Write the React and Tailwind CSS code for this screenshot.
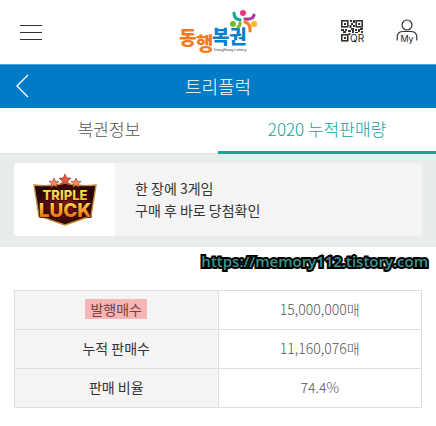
import React from "react";

const rows = [
  { label: "발행매수", value: "15,000,000매", marked: true },
  { label: "누적 판매수", value: "11,160,076매" },
  { label: "판매 비율", value: "74.4%" },
];

function Logo() {
  return (
    <svg width="80" height="46" viewBox="0 0 80 46" role="img" aria-label="동행복권">
      <g fontFamily="'Noto Sans CJK KR', sans-serif" fontWeight="900" fontSize="19">
        <text x="1" y="36" fill="#f47a20">동</text>
        <text x="18" y="42" fill="#f47a20">행</text>
        <text x="34" y="35" fill="#0a7fca">복</text>
        <text x="51" y="35" fill="#0a7fca">권</text>
      </g>
      <text x="36" y="42" fontFamily="'Liberation Sans', sans-serif" fontSize="4" fill="#444">DongHang Lottery</text>
      <g fill="none" strokeWidth="3.2" strokeLinecap="round">
        <path d="M56 4 Q56 10 62 11" stroke="#16a596" />
        <path d="M67 10 Q75 11 76 6" stroke="#b03a9c" />
        <path d="M67 13 Q73 15 72 22" stroke="#f4801f" />
        <path d="M60 18 Q62 17 62 14" stroke="#79b829" />
      </g>
      <circle cx="65" cy="4" r="3" fill="#e5367e" />
      <circle cx="55" cy="15" r="3" fill="#79b829" />
      <circle cx="76" cy="15" r="3" fill="#f9b51c" />
    </svg>
  );
}

function QrIcon() {
  return (
    <svg width="26" height="26" viewBox="0 0 26 26" aria-hidden="true">
      <g fill="none" stroke="#333" strokeWidth="1.6">
        <rect x="1.8" y="1.8" width="6" height="6" />
        <rect x="16.2" y="1.8" width="6" height="6" />
        <rect x="1.8" y="15.8" width="6" height="6" />
      </g>
      <path
        fill="#333"
        d="M4 4h2v2h-2zM18.200 4h2v2h-2zM4 18h2v2h-2zM10 1h2v2h-2zM13 1h2v3h-2zM11 4h2v2h-2zM9.500 6h2v3h-2zM13 6h2v2h-2zM1 10h3v2h-3zM5 10h2v2h-2zM3 12h3v2h-3zM8 11h3v2h-3zM11 9h3v2h-3zM12 11h2v3h-2zM15 10h2v2h-2zM18 10h2v3h-2zM20 9h3v2h-3zM15 13h3v1h-3zM21 12h2v2h-2zM8.500 14h2v2h-2z"
      />
      <text x="10" y="23" fontFamily="Inter, sans-serif" fontWeight="400" fontSize="10" fill="#222">QR</text>
    </svg>
  );
}

function MyIcon() {
  return (
    <svg width="22" height="28" viewBox="0 0 22 28" aria-hidden="true">
      <g fill="none" stroke="#333" strokeWidth="1.2" strokeLinecap="round">
        <circle cx="11" cy="7" r="5" />
        <path d="M1.200 22V19Q1.200 14 6.500 13.500H15.500Q20.800 14 20.800 19V22" />
      </g>
      <text x="11" y="24" textAnchor="middle" fontFamily="Inter, sans-serif" fontWeight="400" fontSize="9" fill="#222">My</text>
    </svg>
  );
}

const star = "M0 -6 L1.700 -2.100 L6 -1.800 L2.700 1 L3.700 5 L0 2.800 L-3.700 5 L-2.700 1 L-6 -1.800 L-1.700 -2.100Z";

function TripleLuck() {
  return (
    <svg width="66" height="54" viewBox="0 0 66 54" role="img" aria-label="Triple Luck">
      <defs>
        <linearGradient id="gold" x1="0" y1="0" x2="0" y2="1">
          <stop offset="0" stopColor="#fff36a" />
          <stop offset="1" stopColor="#eeb323" />
        </linearGradient>
        <linearGradient id="fire" x1="0" y1="0" x2="0" y2="1">
          <stop offset="0.200" stopColor="#ffd04a" />
          <stop offset="0.800" stopColor="#ef6a12" />
        </linearGradient>
        <radialGradient id="shield">
          <stop offset="0" stopColor="#8e1510" />
          <stop offset="1" stopColor="#260504" />
        </radialGradient>
      </defs>
      <path d="M2 12 Q19 14 33 10 Q47 14 64 12 L59 43 L33 52 L7 43Z" fill="url(#shield)" stroke="#c08a35" strokeWidth="1.400" />
      <g fill="#ee5540" stroke="#8a3a20" strokeWidth="0.700">
        <path d={star} transform="translate(22 10) scale(.85)" fill="#f08a55" />
        <path d={star} transform="translate(44 10) scale(.85)" fill="#f08a55" />
        <path d={star} transform="translate(33 7)" />
      </g>
      <g fontFamily="Inter, sans-serif" textAnchor="middle" stroke="#2a0704" strokeLinejoin="round" paintOrder="stroke">
        <text x="33" y="27" fontSize="13" fontWeight="800" fill="url(#gold)" strokeWidth="1.400">TRIPLE</text>
        <text x="33" y="44" fontSize="19" fontWeight="800" fill="url(#fire)" strokeWidth="1.600">LUCK</text>
      </g>
    </svg>
  );
}

export default function App() {
  return (
    <div className="min-h-screen bg-white font-['Noto_Sans_CJK_KR',sans-serif] text-[#333]">
      <header className="grid h-16 grid-cols-3 items-center px-[18px]">
        <button type="button" aria-label="메뉴" className="flex w-[26px] flex-col items-center gap-1.5 justify-self-start">
          <span className="h-px w-[22px] bg-[#333]" />
          <span className="h-px w-[22px] bg-[#333]" />
          <span className="h-px w-[22px] bg-[#333]" />
        </button>
        <a href="#home" className="justify-self-center">
          <Logo />
        </a>
        <div className="flex items-center gap-[30px] justify-self-end">
          <button type="button" aria-label="QR">
            <QrIcon />
          </button>
          <button type="button" aria-label="My">
            <MyIcon />
          </button>
        </div>
      </header>

      <div className="grid h-11 grid-cols-[1fr_auto_1fr] items-center border-t border-[#4ba5da] bg-[#007bc6] px-4 pb-0.5 text-white">
        <button type="button" aria-label="뒤로" className="justify-self-start">
          <svg width="13" height="24" viewBox="0 0 13 24" fill="none" stroke="white" strokeWidth="1.400">
            <path d="M12 1L1 12L12 23" />
          </svg>
        </button>
        <h1 className="text-lg leading-6 font-light">트리플럭</h1>
      </div>

      <nav className="grid h-[46px] grid-cols-2 text-[17px] leading-6 font-light">
        <a href="#info" className="flex items-center justify-center border-b border-[#dfe3e3] pb-1 text-[#555]">
          복권정보
        </a>
        <a href="#sales" className="flex items-center justify-center border-b-3 border-[#10a396] pb-0.5 text-[#10a396]">
          2020 누적판매량
        </a>
      </nav>

      <section className="bg-[#e8ecec] px-3.5 pt-[9px] pb-[11px]">
        <div className="flex h-[73px] overflow-hidden rounded-sm bg-[#f4f4f4]">
          <div className="flex w-[101px] shrink-0 items-center justify-center bg-white">
            <TripleLuck />
          </div>
          <p className="flex flex-col justify-center px-5 pb-0.5 text-sm leading-[22px]">
            <span>한 장에 3게임</span>
            <span>구매 후 바로 당첨확인</span>
          </p>
        </div>
      </section>

      <p className="px-2 pt-0.5 text-right font-['Open_Sans',sans-serif] text-[15px] leading-6 font-semibold text-[#3a9491] [-webkit-text-stroke:4px_black] [paint-order:stroke_fill]">
        https://memory112.tistory.com
      </p>

      <main className="px-3.5 pt-[17px]">
        <table className="w-full table-fixed border-collapse text-center text-sm leading-5">
          <tbody>
            {rows.map((row) => (
              <tr key={row.label} className="h-[39px]">
                <th scope="row" className="border border-[#dfdfdf] bg-[#f4f4f4] pb-0.5 font-normal">
                  {row.marked ? (
                    <mark className="inline-block bg-[#f8b5b5] px-[5px] text-[#793f42]">{row.label}</mark>
                  ) : (
                    row.label
                  )}
                </th>
                <td className="border border-[#dfdfdf] pb-0.5 font-light text-[#555]">{row.value}</td>
              </tr>
            ))}
          </tbody>
        </table>
      </main>
    </div>
  );
}
